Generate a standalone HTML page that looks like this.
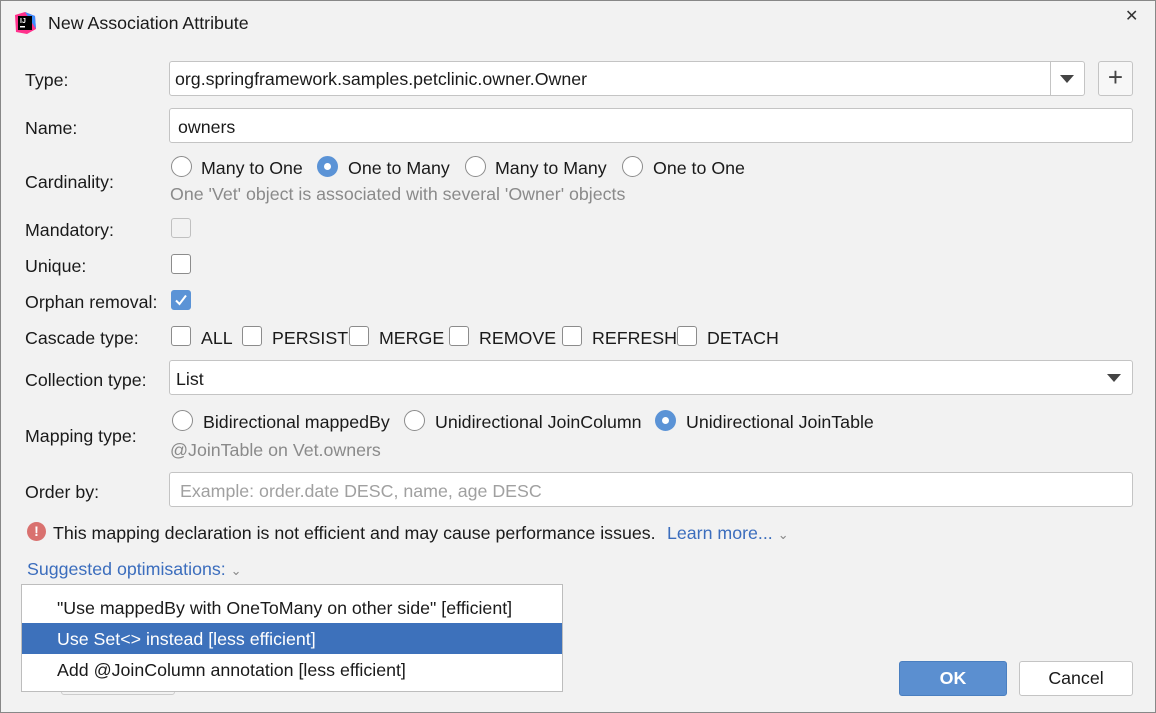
<!DOCTYPE html>
<html><head><meta charset="utf-8"><style>
*{box-sizing:border-box;margin:0;padding:0}
body{width:1156px;height:713px;background:#f2f2f2;font-family:"Liberation Sans",sans-serif;font-size:17.8px;color:#1a1a1a;position:relative;overflow:hidden;border:1px solid #888}
.a{position:absolute;white-space:nowrap}
.f{position:absolute;background:#fff;border:1px solid #c4c4c4;border-radius:3px}
.cb{position:absolute;width:20px;height:20px;border:1px solid #8c8c8c;border-radius:3px;background:#fff}
.rb{position:absolute;width:21px;height:21px;border:1px solid #8c8c8c;border-radius:50%;background:#fff}
.rs{background:#5b93d6;border-color:#5b93d6}
.rs::after{content:"";position:absolute;left:6px;top:6px;width:7px;height:7px;border-radius:50%;background:#fff}
.g{color:#8a8a8a}
.l{color:#3b6dbd}
.tri{position:absolute;width:0;height:0;border-left:7px solid transparent;border-right:7px solid transparent;border-top:8px solid #444}
</style></head><body>
<svg class="a" style="left:12px;top:10px" width="24" height="24" viewBox="0 0 24 24"><path d="M2 4L12 1 22 5 23 18 14 23 3 21Z" fill="#ff318c"/><path d="M12 1L22 5 23 18Z" fill="#3c8dff"/><rect x="5" y="5" width="14" height="14" fill="#000"/><text x="7" y="12" font-size="7" fill="#fff" font-family="Liberation Sans" font-weight="bold">IJ</text><rect x="7" y="15" width="5" height="1.5" fill="#fff"/></svg>
<div class="a" style="left:47px;top:12px">New Association Attribute</div>
<div class="a" style="left:1124px;top:5px;font-size:16px;color:#333">✕</div>

<div class="a" style="left:24px;top:69px">Type:</div>
<div class="f" style="left:168px;top:60px;width:916px;height:35px"></div>
<div class="a" style="left:1049px;top:61px;width:1px;height:33px;background:#c4c4c4"></div>
<div class="tri" style="left:1059px;top:74px"></div>
<div class="a" style="left:174px;top:68px">org.springframework.samples.petclinic.owner.Owner</div>
<div class="f" style="left:1097px;top:60px;width:35px;height:35px;background:#f7f7f7;text-align:center;font-size:26px;line-height:30px;color:#444">+</div>

<div class="a" style="left:24px;top:117px">Name:</div>
<div class="f" style="left:168px;top:107px;width:964px;height:35px"></div>
<div class="a" style="left:177px;top:116px">owners</div>

<div class="a" style="left:24px;top:171px">Cardinality:</div>
<div class="rb" style="left:170px;top:155px"></div><div class="a" style="left:200px;top:157px">Many to One</div>
<div class="rb rs" style="left:316px;top:155px"></div><div class="a" style="left:347px;top:157px">One to Many</div>
<div class="rb" style="left:464px;top:155px"></div><div class="a" style="left:494px;top:157px">Many to Many</div>
<div class="rb" style="left:621px;top:155px"></div><div class="a" style="left:652px;top:157px">One to One</div>
<div class="a g" style="left:169px;top:183px">One 'Vet' object is associated with several 'Owner' objects</div>

<div class="a" style="left:24px;top:219px">Mandatory:</div>
<div class="cb" style="left:170px;top:217px;border-color:#c0c0c0;background:#f2f2f2"></div>
<div class="a" style="left:24px;top:255px">Unique:</div>
<div class="cb" style="left:170px;top:253px"></div>
<div class="a" style="left:24px;top:291px">Orphan removal:</div>
<div class="cb" style="left:170px;top:289px;background:#5b93d6;border-color:#5b93d6"><svg width="18" height="18" viewBox="0 0 18 18"><path d="M4 9.5L7.5 13 14 4.5" stroke="#fff" stroke-width="2" fill="none"/></svg></div>

<div class="a" style="left:24px;top:327px">Cascade type:</div>
<div class="cb" style="left:170px;top:325px"></div><div class="a" style="left:200px;top:327px">ALL</div>
<div class="cb" style="left:241px;top:325px"></div><div class="a" style="left:271px;top:327px">PERSIST</div>
<div class="cb" style="left:348px;top:325px"></div><div class="a" style="left:378px;top:327px">MERGE</div>
<div class="cb" style="left:448px;top:325px"></div><div class="a" style="left:478px;top:327px">REMOVE</div>
<div class="cb" style="left:561px;top:325px"></div><div class="a" style="left:591px;top:327px">REFRESH</div>
<div class="cb" style="left:676px;top:325px"></div><div class="a" style="left:706px;top:327px">DETACH</div>

<div class="a" style="left:24px;top:369px">Collection type:</div>
<div class="f" style="left:168px;top:359px;width:964px;height:35px"></div>
<div class="a" style="left:175px;top:368px">List</div>
<div class="tri" style="left:1106px;top:373px"></div>

<div class="a" style="left:24px;top:425px">Mapping type:</div>
<div class="rb" style="left:171px;top:409px"></div><div class="a" style="left:202px;top:411px">Bidirectional mappedBy</div>
<div class="rb" style="left:403px;top:409px"></div><div class="a" style="left:434px;top:411px">Unidirectional JoinColumn</div>
<div class="rb rs" style="left:654px;top:409px"></div><div class="a" style="left:685px;top:411px">Unidirectional JoinTable</div>
<div class="a g" style="left:169px;top:439px">@JoinTable on Vet.owners</div>

<div class="a" style="left:24px;top:481px">Order by:</div>
<div class="f" style="left:168px;top:471px;width:964px;height:35px"></div>
<div class="a" style="left:179px;top:480px;color:#a0a0a0">Example: order.date DESC, name, age DESC</div>

<div class="a" style="left:26px;top:521px;width:19px;height:19px;border-radius:50%;background:#d9716f;color:#fff;font-weight:bold;font-size:14px;text-align:center;line-height:19px">!</div>
<div class="a" style="left:52px;top:522px">This mapping declaration is not efficient and may cause performance issues.</div>
<div class="a l" style="left:666px;top:522px">Learn more... <span style="color:#888;font-size:13px">⌄</span></div>
<div class="a l" style="left:26px;top:558px">Suggested optimisations: <span style="color:#888;font-size:13px">⌄</span></div>

<div class="a" style="left:30px;top:672px;width:18px;height:18px;border:1px solid #ccc;border-radius:50%"></div>
<div class="a" style="left:60px;top:664px;width:114px;height:30px;border:1px solid #ccc;border-radius:3px"></div>
<div class="a" style="left:20px;top:583px;width:542px;height:108px;background:#fff;border:1px solid #bdbdbd"></div>
<div class="a" style="left:56px;top:597px">"Use mappedBy with OneToMany on other side" [efficient]</div>
<div class="a" style="left:21px;top:622px;width:540px;height:31px;background:#3d71bb"></div>
<div class="a" style="left:56px;top:628px;color:#fff">Use Set&lt;&gt; instead [less efficient]</div>
<div class="a" style="left:56px;top:659px">Add @JoinColumn annotation [less efficient]</div>

<div class="a" style="left:898px;top:660px;width:108px;height:35px;background:#5b8fd0;border:1px solid #4a7fc0;border-radius:3px;color:#fff;font-weight:bold;text-align:center;line-height:33px">OK</div>
<div class="a" style="left:1018px;top:660px;width:114px;height:35px;background:#fff;border:1px solid #c4c4c4;border-radius:3px;text-align:center;line-height:33px">Cancel</div>
</body></html>
